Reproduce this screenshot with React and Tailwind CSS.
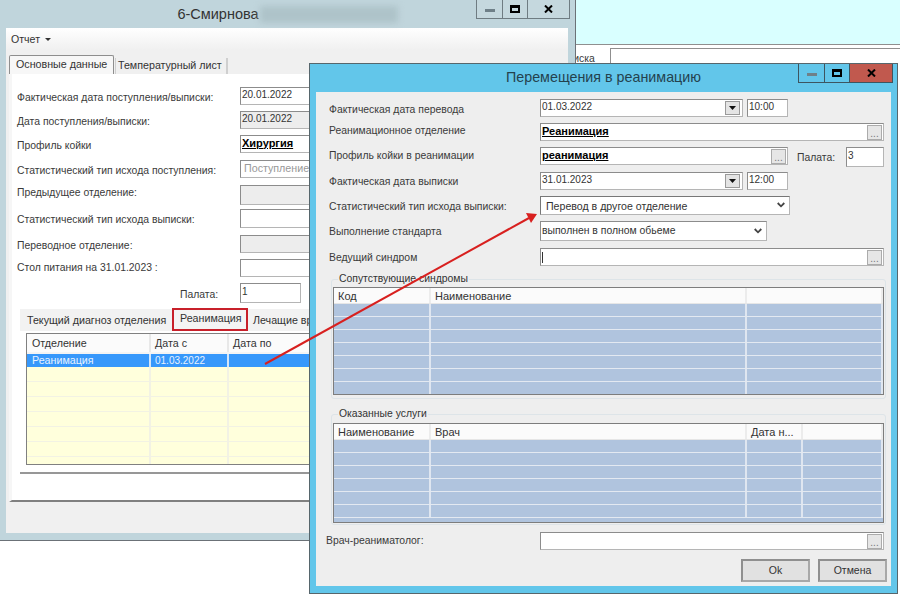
const labelCls = "text-[#3a3a3a] whitespace-nowrap text-[10.4px] leading-[12px]";

function Input({ className = "", children, bg = "bg-white" }) {
  return (
    <div className={`flex items-center border border-[#8c8c8c] border-r-[#b5b5b5] border-b-[#b5b5b5] ${bg} pl-[1px] pb-[3px] leading-[12px] text-[#333] text-[10px] overflow-hidden whitespace-nowrap ${className}`}>
      {children}
    </div>
  );
}

function DotsBtn() {
  return (
    <div className="ml-auto mr-[1px] mt-[3px] w-[15px] h-[15px] shrink-0 border border-[#ababab] bg-[#e6e6e6] text-[#777] text-[10px] leading-[16px] text-center">...</div>
  );
}

function DropBtn() {
  return (
    <div className="ml-auto mr-[2px] mt-[3px] w-[15px] h-[14px] shrink-0 border border-[#9a9a9a] bg-[#e4e4e4] flex items-center justify-center">
      <svg width="7" height="4" viewBox="0 0 7 4"><path d="M0 0h7L3.5 4z" fill="#111" /></svg>
    </div>
  );
}

function Chevron() {
  return (
    <svg className="ml-auto mr-[4px] mt-[2px]" width="8" height="6" viewBox="0 0 8 6" fill="none">
      <path d="M0.7 1l3.3 3.3L7.3 1" stroke="#444" strokeWidth="1.8" />
    </svg>
  );
}

function Bold({ children }) {
  return <span className="font-bold text-[11px] text-black underline">{children}</span>;
}

function CaptionButtons({ className, close, border, widths, frame }) {
  return (
    <div className={`absolute top-0 flex h-[19px] ${className}`}>
      <div className={`${widths[0]} border-l border-b ${border} ${frame} flex items-center justify-center`}>
        <div className="w-[10px] h-[3px] bg-[#6f8088] mt-[3px]" />
      </div>
      <div className={`${widths[1]} border-l border-b ${border} ${frame} flex items-center justify-center`}>
        <div className="w-[10px] h-[8px] border-2 border-t-[3px] border-black" />
      </div>
      <div className={`${widths[2]} border-x border-b ${border} ${close} flex items-center justify-center`}>
        <svg width="9" height="8" viewBox="0 0 9 8"><path d="M1 0.5l7 7M8 0.5l-7 7" stroke="#000" strokeWidth="2" /></svg>
      </div>
    </div>
  );
}

function Grid({ height, header, widths, rows }) {
  return (
    <div className={`border border-[#7d7d7d] bg-[#b0c4de] overflow-hidden ${height}`}>
      <div className="flex h-[16px] bg-[#fbfbfb] border-b border-[#e6e6e6] leading-[17px] text-[#333] text-[11px]">
        {header.map((h, i) => (
          <div key={i} className={`${widths[i]} shrink-0 pl-[4px] border-r-2 border-[#ececec] overflow-hidden whitespace-nowrap`}>{h}</div>
        ))}
      </div>
      {Array.from({ length: rows }).map((_, r) => (
        <div key={r} className="flex h-[13px] border-b border-[#e3e9f1]">
          {header.map((h, i) => (
            <div key={i} className={`${widths[i]} shrink-0 border-r-2 border-[#dfe6f0]`} />
          ))}
        </div>
      ))}
    </div>
  );
}

function LeftRow({ label, mt, h = "h-[18px]", children, bg, lift = "pt-[3px]" }) {
  return (
    <div className={`flex items-center ${mt}`}>
      <div className={`w-[223px] shrink-0 ${labelCls} ${lift}`}>{label}</div>
      <Input className={`w-[330px] ${h}`} bg={bg}>{children}</Input>
    </div>
  );
}

function LeftWindow() {
  const rows = Array.from({ length: 7 });
  return (
    <div className="absolute left-0 top-0 w-[576px] h-[541px] bg-[#c0d5dc] border-r border-b border-[#6b7177] flex flex-col">
      <div className="h-[28px] shrink-0 flex justify-center items-center">
        <span className="text-[14.5px] text-[#333] mt-[1px]">6-Смирнова</span>
        <div className="w-[138px] h-[17px] ml-[1px] bg-[#aec3c9] blur-[3px]" />
      </div>
      <CaptionButtons
        className="left-[476px]"
        widths={["w-[26px]", "w-[25px]", "w-[43px]"]}
        border="border-[#6f7c82]"
        frame="bg-[#c5d8de]"
        close="bg-[#c5d8de]"
      />
      <div className="ml-[6px] w-[562px] h-[505px] bg-[#f0f0f0] flex flex-col shrink-0">
        <div className="h-[22px] shrink-0 bg-gradient-to-b from-white to-[#f0f0f0] flex items-center pl-[5px] pt-[1px] text-[#333] text-[10.6px]">
          Отчет
          <svg className="ml-[5px]" width="6" height="3" viewBox="0 0 6 3"><path d="M0 0h6L3 3z" fill="#333" /></svg>
        </div>
        <div className="h-[24px] shrink-0 flex items-end pl-[3px] text-[10.7px]">
          <div className="h-[19px] w-[105px] border border-b-0 border-[#8e8e8e] rounded-t-[2px] bg-[#f7f7f7] text-[#333] pl-[6px] leading-[17px]">Основные данные</div>
          <div className="h-[16px] w-[113px] ml-[1px] border-r-2 border-[#8e8e8e] border-l border-[#cfcfcf] bg-[#f0f0f0] text-[#333] font-medium pl-[2px] leading-[15px] whitespace-nowrap">Температурный лист</div>
        </div>
        <div className="ml-[3px] flex-1 border-l-[3px] border-[#f6f6f6] border-b-2 border-b-[#808080] bg-white pl-[5px] flex flex-col">
          <LeftRow label="Фактическая дата поступления/выписки:" mt="mt-[13px]">20.01.2022</LeftRow>
          <LeftRow label="Дата поступления/выписки:" mt="mt-[6px]" bg="bg-[#ededed]">20.01.2022</LeftRow>
          <LeftRow label="Профиль койки" mt="mt-[6px]"><Bold>Хирургия</Bold></LeftRow>
          <LeftRow label="Статистический тип исхода поступления:" mt="mt-[7px]"><span className="text-[#999] text-[10.7px] pl-[2px]">Поступление</span></LeftRow>
          <LeftRow label="Предыдущее отделение:" mt="mt-[7px]" h="h-[20px]" bg="bg-[#ededed]" lift="-mt-[5px]" />
          <LeftRow label="Статистический тип исхода выписки:" mt="mt-[4px]" h="h-[19px]" />
          <LeftRow label="Переводное отделение:" mt="mt-[7px]" bg="bg-[#ededed]" />
          <LeftRow label="Стол питания на 31.01.2023 :" mt="mt-[6px]" lift="" />
          <div className="flex items-center mt-[6px] h-[20px]">
            <div className="w-[163px] shrink-0" />
            <div className={`w-[60px] shrink-0 ${labelCls} pt-[3px]`}>Палата:</div>
            <Input className="w-[61px] h-[20px]">1</Input>
          </div>
          <div className="ml-[3px] mt-[6px] flex-1 mb-[26px] border-b-2 border-[#979797] flex flex-col">
            <div className="h-[22px] shrink-0 flex bg-[#f2f2f2] items-center text-[#333] whitespace-nowrap text-[10.7px]">
              <div className="w-[152px] pl-[7px] font-medium">Текущий диагноз отделения</div>
              <div className="w-[76px] h-[23px] -mt-[1px] border-2 border-[#c8202a] bg-[#f4f4f4] pl-[6px] leading-[17px]">Реанимация</div>
              <div className="pl-[5px] font-medium">Лечащие врачи</div>
            </div>
            <div className="ml-[6px] mt-[2px] h-[132px] w-[520px] border border-[#808080] bg-[#ffffdc] overflow-hidden text-[#333] text-[10.7px]">
              <div className="flex h-[18px] bg-[#fbfbfb] leading-[18px]">
                <div className="w-[124px] pl-[5px] border-r-2 border-[#e8e8e8]">Отделение</div>
                <div className="w-[78px] pl-[4px] border-r-2 border-[#e8e8e8]">Дата с</div>
                <div className="flex-1 pl-[4px]">Дата по</div>
              </div>
              <div className="flex h-[15px] bg-[#3798fb] border-t-2 border-[#f4f4f4] text-[#e8f2ff] leading-[13px]">
                <div className="w-[124px] pl-[5px] border-r-2 border-[#d5e6f8]">Реанимация</div>
                <div className="w-[78px] pl-[4px] border-r-2 border-[#d5e6f8] text-[10px]">01.03.2022</div>
                <div className="flex-1" />
              </div>
              {rows.map((_, i) => (
                <div key={i} className="flex h-[15px] border-b border-[#f2f2e4]">
                  <div className="w-[124px] border-r-2 border-[#f2f2e4]" />
                  <div className="w-[78px] border-r-2 border-[#f2f2e4]" />
                  <div className="flex-1" />
                </div>
              ))}
            </div>
          </div>
        </div>
        <div className="h-[31px] shrink-0" />
      </div>
    </div>
  );
}

function DRow({ label, mt, pt, children }) {
  return (
    <div className={`flex ${mt}`}>
      <div className={`w-[211px] shrink-0 ${labelCls} ${pt}`}>{label}</div>
      {children}
    </div>
  );
}

function Dialog() {
  return (
    <div className="absolute left-[309px] top-[63px] w-[589px] h-[531px] bg-[#62c6ea] border border-[#56666c] flex flex-col">
      <div className="h-[28px] shrink-0 flex items-center justify-center text-[14.3px] text-[#24424e] pb-[1px]">Перемещения в реанимацию</div>
      <CaptionButtons
        className="left-[488px]"
        widths={["w-[26px]", "w-[25px]", "w-[44px]"]}
        border="border-[#3d5560]"
        frame="bg-[#62c6ea]"
        close="bg-[#c1594e]"
      />
      <div className="ml-[6px] mr-[6px] w-[575px] h-[494px] shrink-0 bg-[#eeeeee] flex flex-col pl-[13px] pt-[7px]">
        <DRow label="Фактическая дата перевода" mt="" pt="pt-[5px]">
          <Input className="w-[203px] h-[18px]">01.03.2022<DropBtn /></Input>
          <Input className="w-[41px] h-[18px] ml-[4px]">10:00</Input>
        </DRow>
        <DRow label="Реанимационное отделение" mt="mt-[6px]" pt="pt-[2px]">
          <Input className="w-[344px] h-[18px]"><Bold>Реанимация</Bold><DotsBtn /></Input>
        </DRow>
        <div className="flex mt-[6px]">
          <div className={`w-[211px] shrink-0 ${labelCls} pt-[3px]`}>Профиль койки в реанимации</div>
          <Input className="w-[248px] h-[18px]"><Bold>реанимация</Bold><DotsBtn /></Input>
          <div className={`ml-[9px] w-[49px] ${labelCls} pt-[5px]`}>Палата:</div>
          <Input className="w-[38px] h-[20px]">3</Input>
        </div>
        <DRow label="Фактическая дата выписки" mt="mt-[5px]" pt="pt-[4px]">
          <Input className="w-[203px] h-[18px]">31.01.2023<DropBtn /></Input>
          <Input className="w-[41px] h-[18px] ml-[4px]">12:00</Input>
        </DRow>
        <DRow label="Статистический тип исхода выписки:" mt="mt-[6px]" pt="pt-[5px]">
          <Input className="w-[250px] h-[19px] pl-[3px] border-[#777]"><span className="text-[10.6px] pl-[2px] mt-[3px]">Перевод в другое отделение</span><Chevron /></Input>
        </DRow>
        <DRow label="Выполнение стандарта" mt="mt-[6px]" pt="pt-[5px]">
          <Input className="w-[227px] h-[20px]"><span className="text-[10.4px] mt-[2px]">выполнен в полном обьеме</span><Chevron /></Input>
        </DRow>
        <DRow label="Ведущий синдром" mt="mt-[7px]" pt="pt-[4px]">
          <Input className="w-[344px] h-[18px]"><div className="w-[1px] h-[11px] bg-[#333] mt-[3px]" /><DotsBtn /></Input>
        </DRow>
        <fieldset className="w-[555px] ml-[2px] mt-[6px] h-[127px] border border-[#dde4e8] rounded-[3px] px-[1px]">
          <legend className="ml-[5px] px-[1px] leading-[14px] text-[#333] text-[10.4px]">Сопутствующие синдромы</legend>
          <div className="mt-[1px]">
            <Grid
              height="h-[108px]"
              header={["Код", "Наименование", ""]}
              widths={["w-[97px]", "w-[316px]", "w-[136px]"]}
              rows={7}
            />
          </div>
        </fieldset>
        <fieldset className="w-[555px] ml-[2px] mt-[8px] h-[118px] border border-[#dde4e8] rounded-[3px] px-[1px]">
          <legend className="ml-[5px] px-[1px] leading-[14px] text-[#333] text-[10.4px]">Оказанные услуги</legend>
          <div className="mt-[2px]">
            <Grid
              height="h-[100px]"
              header={["Наименование", "Врач", "Дата н...", ""]}
              widths={["w-[97px]", "w-[316px]", "w-[56px]", "w-[80px]"]}
              rows={6}
            />
          </div>
        </fieldset>
        <div className="flex mt-[7px] -ml-[3px]">
          <div className={`w-[214px] shrink-0 ${labelCls} pt-[3px]`}>Врач-реаниматолог:</div>
          <Input className="w-[344px] h-[18px]"><DotsBtn /></Input>
        </div>
        <div className="flex justify-end gap-[8px] mt-[9px] mr-[4px] text-[#333] text-[10.5px]">
          <div className="w-[69px] h-[23px] border-2 border-[#8f8f8f] border-r-[#a8a8a8] border-b-[#a8a8a8] bg-[#e1e1e1] flex items-center justify-center">Ok</div>
          <div className="w-[69px] h-[23px] border-2 border-[#8f8f8f] border-r-[#a8a8a8] border-b-[#a8a8a8] bg-[#e1e1e1] flex items-center justify-center">Отмена</div>
        </div>
      </div>
    </div>
  );
}

export default function App() {
  return (
    <div className="relative w-[900px] h-[596px] overflow-hidden bg-white font-['Liberation_Sans',sans-serif] text-[11px]">
      <div className="h-[45px] bg-[#d9ffff] border-b border-[#8f8f8f]" />
      <div className="flex pt-[3px] pl-[560px]">
        <div className={`w-[50px] ${labelCls} pt-[5px]`}>Поиска</div>
        <div className="flex-1 h-[24px] border-l border-t border-[#8f8f8f]" />
      </div>
      <LeftWindow />
      <Dialog />
      <svg className="absolute left-0 top-0 pointer-events-none" width="900" height="596" viewBox="0 0 900 596">
        <path d="M265 364L529 218" stroke="#d8201f" strokeWidth="2" />
        <path d="M537 214L526 213L531 223z" fill="#d8201f" />
      </svg>
    </div>
  );
}
